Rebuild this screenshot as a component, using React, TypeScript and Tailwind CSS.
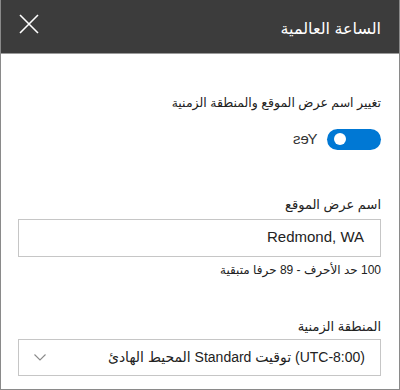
import React from "react";

const font = { fontFamily: '"Liberation Sans", "DejaVu Sans", sans-serif' };

const App = () => {
  return (
    <div
      dir="rtl"
      style={font}
      className="w-[400px] h-[390px] bg-white border border-[#8a8a8a] border-t-0 flex flex-col overflow-hidden"
    >
      {/* Header */}
      <div className="h-[54px] shrink-0 bg-[#3c3c3c] border-b border-[#9a9a9a] flex items-center justify-between pr-[18px] pl-[18px]">
        <span className="text-white text-[16px] leading-none mt-[4px]">الساعة العالمية</span>
        <button className="w-[20px] h-[20px] -mt-[6px]" aria-label="close">
          <svg viewBox="0 0 20 20" width="20" height="20" fill="none" stroke="#ffffff" strokeWidth="1.6">
            <path d="M1 1 L19 19 M19 1 L1 19" />
          </svg>
        </button>
      </div>

      {/* Body */}
      <div className="flex flex-col pl-[17px] pr-[18px]">
        <div className="mt-[39px] text-[12.5px] leading-[20px] text-[#222]">
          تغيير اسم عرض الموقع والمنطقة الزمنية
        </div>
        <div className="mt-[15px] flex items-center gap-[10px]">
          <div className="w-[54px] h-[21px] rounded-full bg-[#0078d4] flex items-center pl-[7px] justify-end">
            <div className="w-[12px] h-[12px] rounded-full bg-white" />
          </div>
          <span className="text-[15px] text-[#333] -scale-x-100 inline-block">Yes</span>
        </div>

        <div className="mt-[44px] text-[13px] leading-[20px] text-[#222]">اسم عرض الموقع</div>
        <div className="mt-[4px] h-[38px] border border-[#c6c6c6] flex items-center pr-[16px] text-[15px] text-[#222]">
          Redmond, WA
        </div>
        <div className="mt-[5px] text-[12px] leading-[16px] text-[#222]">
          100 حد الأحرف - 89 حرفا متبقية
        </div>

        <div className="mt-[39px] text-[13px] leading-[20px] text-[#222]">المنطقة الزمنية</div>
        <div className="mt-[2px] h-[37px] border border-[#c6c6c6] flex items-center justify-between pr-[15px] pl-[15px] text-[14px] text-[#222]">
          <span>(UTC-8:00) توقيت Standard المحيط الهادئ</span>
          <svg viewBox="0 0 12 7" width="12" height="7" fill="none" stroke="#8a8a8a" strokeWidth="1.1">
            <path d="M0.5 0.5 L6 6 L11.5 0.5" />
          </svg>
        </div>
      </div>
    </div>
  );
};

export default App;
